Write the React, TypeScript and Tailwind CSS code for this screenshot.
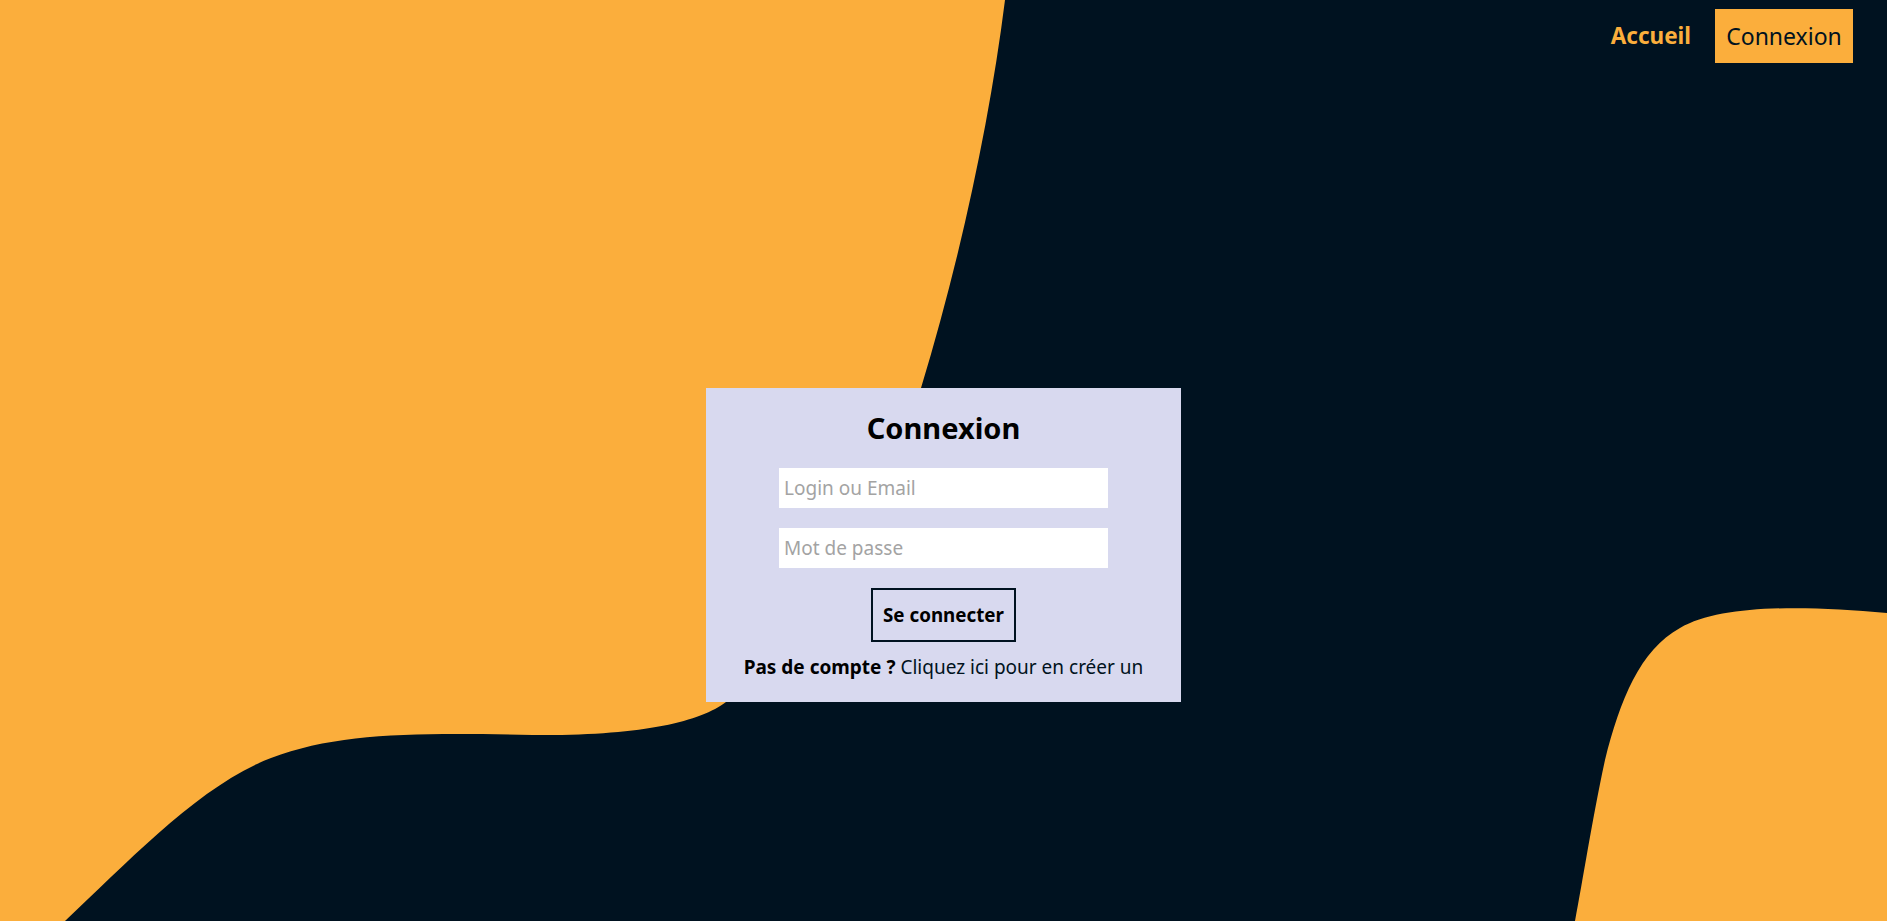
import React from "react";

export default function App() {
  return (
    <div className="relative w-full h-screen overflow-hidden bg-[#001220] font-['Noto_Sans',sans-serif]">
      <svg
        className="absolute inset-0 w-full h-full"
        viewBox="0 0 1887 921"
        preserveAspectRatio="none"
        aria-hidden="true"
      >
        <path
          fill="#FBAE3C"
          d="M0,0 L1005,0 C990,120 960,260 921,388 C880,520 800,650 726,702 C700,722 640,736 533,735 C420,733 340,732 271,758 C200,785 130,860 65,921 L0,921 Z"
        />
        <path
          fill="#FBAE3C"
          d="M1887,613 C1800,605 1720,605 1680,628 C1640,650 1620,700 1605,760 C1592,820 1583,880 1575,921 L1887,921 Z"
        />
      </svg>

      <div className="relative flex flex-col">
        <nav className="flex justify-end items-center pt-[9px] pr-[34px] gap-[24px]">
          <a className="text-[22.5px] font-bold text-[#FBAE3C] cursor-pointer">Accueil</a>
          <a className="h-[54px] w-[138px] flex items-center justify-center bg-[#FBAE3C] text-[23px] text-[#001220] cursor-pointer">
            Connexion
          </a>
        </nav>

        <main className="flex justify-center mt-[325px]">
          <div className="w-[475px] h-[314px] bg-[#d8d9ef] flex flex-col items-center pt-[20px]">
            <h1 className="text-[29px] font-bold text-black leading-[40px]">Connexion</h1>
            <input
              className="mt-[20px] w-[329px] h-[40px] bg-white px-[5px] text-[19px] text-black placeholder:text-[#a3a3a3] outline-none"
              placeholder="Login ou Email"
            />
            <input
              type="password"
              className="mt-[20px] w-[329px] h-[40px] bg-white px-[5px] text-[19px] text-black placeholder:text-[#a3a3a3] outline-none"
              placeholder="Mot de passe"
            />
            <button className="mt-[20px] w-[145px] h-[54px] border-2 border-[#001220] text-[18.8px] font-bold text-black">
              Se connecter
            </button>
            <p className="mt-[11px] text-[19px] text-black">
              <span className="font-bold">Pas de compte ?</span>{" "}
              <a className="text-[#001220] cursor-pointer">Cliquez ici pour en créer un</a>
            </p>
          </div>
        </main>
      </div>
    </div>
  );
}
